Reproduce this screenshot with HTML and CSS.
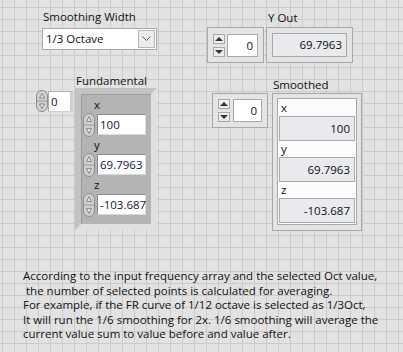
FILE: index.html
```html
<!DOCTYPE html>
<html lang="en">
<head>
  <meta charset="UTF-8" />
  <title>Octave Smoothing</title>
  <link rel="stylesheet" href="styles.css">
</head>
<body>
  <div class="panel">
    <div class="top-row">
      <div class="smoothing">
        <div class="label">Smoothing Width</div>
        <div class="ring">
          <span class="ring-text">1/3 Octave</span>
          <span class="ring-btn">
            <svg width="9" height="6" viewBox="0 0 9 6"><polyline points="0.5,0.5 4.5,4.5 8.5,0.5" fill="none" stroke="#5a5a5a" stroke-width="1"/></svg>
          </span>
        </div>
      </div>

      <div class="yout">
        <div class="num-ctl">
          <div class="spin">
            <span class="spin-btn"><span class="arrow-up"></span></span>
            <span class="spin-btn"><span class="arrow-down"></span></span>
          </div>
          <div class="num-box">0</div>
        </div>
        <div class="field">
          <div class="label yout-label">Y Out</div>
          <div class="ind">
            <div class="ind-box">69.7963</div>
          </div>
        </div>
      </div>
    </div>

    <div class="mid-row">
      <!-- classic cluster -->
      <div class="fund">
        <div class="classic-ctl">
          <svg class="incr" width="12" height="22" viewBox="0 0 12 22">
            <rect x="0.5" y="0.5" width="11" height="21" rx="5.5" fill="#cfcfcf" stroke="#8e8e8e"/>
            <line x1="1" y1="11" x2="11" y2="11" stroke="#9a9a9a"/>
            <polygon points="6,3.5 8.5,8 3.5,8" fill="#e6e6e6" stroke="#7a7a7a" stroke-width="0.8"/>
            <polygon points="6,18.5 8.5,14 3.5,14" fill="#e6e6e6" stroke="#7a7a7a" stroke-width="0.8"/>
          </svg>
          <div class="classic-box small">0</div>
        </div>
        <div class="field fund-field">
          <div class="label fund-label">Fundamental</div>
          <div class="classic-cluster">
            <div class="cc-item">
              <div class="label cc-label">x</div>
              <div class="cc-row">
                <svg class="incr" width="12" height="24" viewBox="0 0 12 24">
                  <rect x="0.5" y="0.5" width="11" height="23" rx="5.5" fill="#cfcfcf" stroke="#8e8e8e"/>
                  <line x1="1" y1="12" x2="11" y2="12" stroke="#9a9a9a"/>
                  <polygon points="6,3.5 8.5,8.5 3.5,8.5" fill="#e6e6e6" stroke="#7a7a7a" stroke-width="0.8"/>
                  <polygon points="6,20.5 8.5,15.5 3.5,15.5" fill="#e6e6e6" stroke="#7a7a7a" stroke-width="0.8"/>
                </svg>
                <div class="classic-box">100</div>
              </div>
            </div>
            <div class="cc-item">
              <div class="label cc-label">y</div>
              <div class="cc-row">
                <svg class="incr" width="12" height="24" viewBox="0 0 12 24">
                  <rect x="0.5" y="0.5" width="11" height="23" rx="5.5" fill="#cfcfcf" stroke="#8e8e8e"/>
                  <line x1="1" y1="12" x2="11" y2="12" stroke="#9a9a9a"/>
                  <polygon points="6,3.5 8.5,8.5 3.5,8.5" fill="#e6e6e6" stroke="#7a7a7a" stroke-width="0.8"/>
                  <polygon points="6,20.5 8.5,15.5 3.5,15.5" fill="#e6e6e6" stroke="#7a7a7a" stroke-width="0.8"/>
                </svg>
                <div class="classic-box">69.7963</div>
              </div>
            </div>
            <div class="cc-item">
              <div class="label cc-label">z</div>
              <div class="cc-row">
                <svg class="incr" width="12" height="24" viewBox="0 0 12 24">
                  <rect x="0.5" y="0.5" width="11" height="23" rx="5.5" fill="#cfcfcf" stroke="#8e8e8e"/>
                  <line x1="1" y1="12" x2="11" y2="12" stroke="#9a9a9a"/>
                  <polygon points="6,3.5 8.5,8.5 3.5,8.5" fill="#e6e6e6" stroke="#7a7a7a" stroke-width="0.8"/>
                  <polygon points="6,20.5 8.5,15.5 3.5,15.5" fill="#e6e6e6" stroke="#7a7a7a" stroke-width="0.8"/>
                </svg>
                <div class="classic-box">-103.687</div>
              </div>
            </div>
          </div>
        </div>
      </div>

      <!-- modern cluster -->
      <div class="smooth">
        <div class="num-ctl small-ctl">
          <div class="spin">
            <span class="spin-btn"><span class="arrow-up"></span></span>
            <span class="spin-btn"><span class="arrow-down"></span></span>
          </div>
          <div class="num-box">0</div>
        </div>
        <div class="field smooth-field">
          <div class="label sm-label">Smoothed</div>
          <div class="sm-cluster">
            <div class="sm-inner">
              <div class="label sm-item-label">x</div>
              <div class="sm-box">100</div>
              <div class="label sm-item-label">y</div>
              <div class="sm-box">69.7963</div>
              <div class="label sm-item-label">z</div>
              <div class="sm-box">-103.687</div>
            </div>
          </div>
        </div>
      </div>
    </div>

    <p class="note">According to the input frequency array and the selected Oct value,<br>&nbsp;the number of selected points is calculated for averaging.<br>For example, if the FR curve of 1/12 octave is selected as 1/3Oct,<br>It will run the 1/6 smoothing for 2x. 1/6 smoothing will average the<br>current value sum to value before and value after.</p>
  </div>
</body>
</html>
```

FILE: styles.css
```css
body {
  margin: 0;
  width: 403px;
  height: 352px;
  overflow: hidden;
  background-color: #e2e2e2;
  background-image:
    linear-gradient(#cbcbcb 1px, transparent 1px),
    linear-gradient(90deg, #cbcbcb 1px, transparent 1px);
  background-size: 12px 12px;
  background-position: 2px 7px;
  font-family: "Open Sans", "Noto Sans", sans-serif;
  font-size: 11.5px;
  color: #111;
}

.panel {
  padding-top: 9px;
}

.label {
  height: 15px;
  line-height: 15px;
  white-space: nowrap;
}

/* top row */
.top-row {
  display: flex;
  align-items: flex-start;
}

.smoothing {
  margin-left: 42px;
  width: 115px;
}

.smoothing .label {
  margin-left: 1px;
  margin-bottom: 4px;
}

.ring {
  display: flex;
  height: 22px;
  box-sizing: border-box;
  border: 1px solid #a9a9a9;
  background: #fff;
}

.ring-text {
  flex: 1;
  padding-left: 3px;
  line-height: 20px;
}

.ring-btn {
  width: 17px;
  margin: 1px 1px 1px 0;
  box-sizing: border-box;
  border: 1px solid #b8b8b8;
  background: #ececec;
  display: flex;
  align-items: center;
  justify-content: center;
}

.yout {
  display: flex;
  align-items: flex-end;
  gap: 2px;
  margin-left: 50px;
  margin-top: 1px;
}

.yout-label {
  padding-left: 2px;
  margin-bottom: 2px;
}

/* modern numeric control */
.num-ctl {
  display: flex;
  align-items: center;
  gap: 2px;
  box-sizing: border-box;
  width: 57px;
  height: 36px;
  padding: 0 5px;
  border: 1px solid #a8a8a8;
  background: #e4e4e4;
}

.spin {
  display: flex;
  flex-direction: column;
  gap: 3px;
}

.spin-btn {
  width: 12px;
  height: 10px;
  box-sizing: border-box;
  border: 1px solid #a8a8a8;
  background: #ededed;
  display: flex;
  align-items: center;
  justify-content: center;
}

.arrow-up,
.arrow-down {
  width: 0;
  height: 0;
  border-left: 4px solid transparent;
  border-right: 4px solid transparent;
}

.arrow-up {
  border-bottom: 4px solid #333;
}

.arrow-down {
  border-top: 4px solid #333;
}

.num-box {
  width: 31px;
  height: 23px;
  box-sizing: border-box;
  border: 1px solid #a8a8a8;
  background: #fff;
  text-align: right;
  padding-right: 4px;
  line-height: 21px;
}

.ind {
  width: 87px;
  height: 36px;
  box-sizing: border-box;
  padding: 5px;
  border: 1px solid #a8a8a8;
  background: #e4e4e4;
}

.ind-box {
  height: 24px;
  box-sizing: border-box;
  border: 1px solid #a8a8a8;
  background: #e8eaee;
  text-align: right;
  padding-right: 4px;
  line-height: 22px;
}

/* middle row */
.mid-row {
  display: flex;
  align-items: flex-start;
  margin-top: 10px;
}

.fund {
  display: flex;
  align-items: flex-start;
  margin-left: 36px;
}

.classic-ctl {
  display: flex;
  align-items: center;
  margin-top: 17px;
}

.classic-box {
  width: 49px;
  height: 21px;
  margin-left: 2px;
  box-sizing: border-box;
  border: 1px solid;
  border-color: #8c8c8c #d8d8d8 #d8d8d8 #8c8c8c;
  background: #fff;
  padding-left: 2px;
  line-height: 19px;
  color: #14143a;
  white-space: nowrap;
}

.classic-box.small {
  width: 25px;
  margin-left: 0;
  border-width: 1px 3px 1px 1px;
  border-color: #b0b0b0 #d0d0d0 #d0d0d0 #b0b0b0;
}

.fund-field {
  margin-left: 2px;
}

.fund-label {
  padding-left: 1px;
}

.classic-cluster {
  width: 82px;
  height: 142px;
  box-sizing: border-box;
  border: 6px solid;
  border-color: #c2c2c2 #e0e0e0 #e0e0e0 #c2c2c2;
  background: #b4b4b4;
  padding: 3px 0 0 2px;
  box-shadow: inset 1px 1px 0 #9c9c9c;
}

.cc-label {
  padding-left: 11px;
}

.cc-row {
  display: flex;
  align-items: center;
  height: 25px;
}

.smooth {
  display: flex;
  align-items: flex-start;
  gap: 4px;
  margin-left: 55px;
}

.small-ctl {
  width: 56px;
  height: 35px;
  margin-top: 20px;
  gap: 3px;
}

.sm-label {
  margin-top: 4px;
  margin-bottom: 1px;
  padding-left: 1px;
}

.sm-cluster {
  box-sizing: border-box;
  height: 138px;
  padding: 4px;
  border: 1px solid #a8a8a8;
  background: #e4e4e4;
}

.sm-inner {
  padding: 1px;
  border: 1px solid #a8a8a8;
  background: #fcfcfc;
}

.sm-item-label {
  height: 16px;
  line-height: 16px;
  padding-left: 2px;
}

.sm-box {
  width: 76px;
  height: 25px;
  box-sizing: border-box;
  border: 1px solid #a8a8a8;
  background: #e8eaee;
  text-align: right;
  padding-right: 4px;
  line-height: 23px;
}

.note {
  margin: 38px 0 0 23px;
  line-height: 14.6px;
  white-space: nowrap;
}
```
